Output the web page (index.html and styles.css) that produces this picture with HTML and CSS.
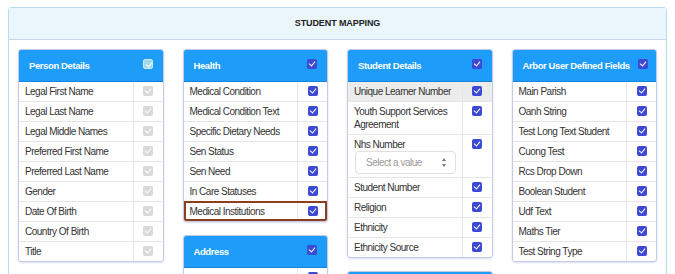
FILE: index.html
```html
<html>
  <head>
    <link rel="stylesheet" href="styles.css">
  </head>
  <body>
    <div class="panel">
      <div class="panel-heading">STUDENT MAPPING</div>
      <div class="panel-body">

        <div class="column">
          <div class="card">
            <div class="card-header">
              <span class="card-title">Person Details</span>
              <span class="head-check"><span class="cb cb-faded"></span></span>
            </div>
            <div class="row"><span class="name">Legal First Name</span><span class="check"><span class="cb cb-off"></span></span></div>
            <div class="row"><span class="name">Legal Last Name</span><span class="check"><span class="cb cb-off"></span></span></div>
            <div class="row"><span class="name">Legal Middle Names</span><span class="check"><span class="cb cb-off"></span></span></div>
            <div class="row"><span class="name">Preferred First Name</span><span class="check"><span class="cb cb-off"></span></span></div>
            <div class="row"><span class="name">Preferred Last Name</span><span class="check"><span class="cb cb-off"></span></span></div>
            <div class="row"><span class="name">Gender</span><span class="check"><span class="cb cb-off"></span></span></div>
            <div class="row"><span class="name">Date Of Birth</span><span class="check"><span class="cb cb-off"></span></span></div>
            <div class="row"><span class="name">Country Of Birth</span><span class="check"><span class="cb cb-off"></span></span></div>
            <div class="row"><span class="name">Title</span><span class="check"><span class="cb cb-off"></span></span></div>
          </div>
        </div>

        <div class="column">
          <div class="card">
            <div class="card-header">
              <span class="card-title">Health</span>
              <span class="head-check"><span class="cb"></span></span>
            </div>
            <div class="row"><span class="name">Medical Condition</span><span class="check"><span class="cb"></span></span></div>
            <div class="row"><span class="name">Medical Condition Text</span><span class="check"><span class="cb"></span></span></div>
            <div class="row"><span class="name">Specific Dietary Needs</span><span class="check"><span class="cb"></span></span></div>
            <div class="row"><span class="name">Sen Status</span><span class="check"><span class="cb"></span></span></div>
            <div class="row"><span class="name">Sen Need</span><span class="check"><span class="cb"></span></span></div>
            <div class="row"><span class="name">In Care Statuses</span><span class="check"><span class="cb"></span></span></div>
            <div class="row highlighted"><span class="name">Medical Institutions</span><span class="check"><span class="cb"></span></span></div>
          </div>
          <div class="card">
            <div class="card-header">
              <span class="card-title">Address</span>
              <span class="head-check"><span class="cb"></span></span>
            </div>
            <div class="row"><span class="name">&nbsp;</span><span class="check"><span class="cb"></span></span></div>
          </div>
        </div>

        <div class="column">
          <div class="card">
            <div class="card-header">
              <span class="card-title">Student Details</span>
              <span class="head-check"><span class="cb"></span></span>
            </div>
            <div class="row active"><span class="name">Unique Learner Number</span><span class="check"><span class="cb"></span></span></div>
            <div class="row"><span class="name">Youth Support Services Agreement</span><span class="check"><span class="cb"></span></span></div>
            <div class="row">
              <span class="name">Nhs Number
                <span class="select">Select a value<span class="arrows"></span></span>
              </span>
              <span class="check"><span class="cb"></span></span>
            </div>
            <div class="row"><span class="name">Student Number</span><span class="check"><span class="cb"></span></span></div>
            <div class="row"><span class="name">Religion</span><span class="check"><span class="cb"></span></span></div>
            <div class="row"><span class="name">Ethnicity</span><span class="check"><span class="cb"></span></span></div>
            <div class="row"><span class="name">Ethnicity Source</span><span class="check"><span class="cb"></span></span></div>
          </div>
          <div class="card">
            <div class="card-header">
              <span class="card-title">&nbsp;</span>
            </div>
          </div>
        </div>

        <div class="column">
          <div class="card">
            <div class="card-header">
              <span class="card-title">Arbor User Defined Fields</span>
              <span class="head-check"><span class="cb"></span></span>
            </div>
            <div class="row"><span class="name">Main Parish</span><span class="check"><span class="cb"></span></span></div>
            <div class="row"><span class="name">Oanh String</span><span class="check"><span class="cb"></span></span></div>
            <div class="row"><span class="name">Test Long Text Student</span><span class="check"><span class="cb"></span></span></div>
            <div class="row"><span class="name">Cuong Test</span><span class="check"><span class="cb"></span></span></div>
            <div class="row"><span class="name">Rcs Drop Down</span><span class="check"><span class="cb"></span></span></div>
            <div class="row"><span class="name">Boolean Student</span><span class="check"><span class="cb"></span></span></div>
            <div class="row"><span class="name">Udf Text</span><span class="check"><span class="cb"></span></span></div>
            <div class="row"><span class="name">Maths Tier</span><span class="check"><span class="cb"></span></span></div>
            <div class="row"><span class="name">Test String Type</span><span class="check"><span class="cb"></span></span></div>
          </div>
        </div>

      </div>
    </div>
  </body>
</html>
```
FILE: styles.css
```css
* {
  box-sizing: border-box;
}

body {
  margin: 0;
  font-family: "Liberation Sans", Arial, sans-serif;
  font-size: 10px;
  letter-spacing: -0.5px;
  color: #333;
  background: #fff;
}

.panel {
  margin: 7px 8px 0 8px;
  border: 1px solid #b6def2;
  border-radius: 3px;
  height: 300px;
}

.panel-heading {
  height: 32px;
  line-height: 30px;
  text-align: center;
  font-weight: bold;
  font-size: 9px;
  letter-spacing: -0.1px;
  color: #222;
  background: #eaf5fc;
  border-bottom: 1px solid #c7d5ee;
}

.panel-body {
  display: grid;
  grid-template-columns: repeat(4, minmax(0, 1fr));
  column-gap: 19px;
  padding: 9px 9px 0 9px;
  align-items: start;
}

.column {
  display: flex;
  flex-direction: column;
  gap: 13px;
}

.card {
  border: 1px solid #c3c9e6;
  border-radius: 3px;
  box-shadow: 0 1px 2px rgba(120, 130, 200, 0.25);
  overflow: hidden;
}

.card-header {
  display: flex;
  height: 32px;
  align-items: center;
  background: #1e9cf9;
  color: #fff;
  font-weight: bold;
  font-size: 9.5px;
  letter-spacing: -0.4px;
  border-bottom: 1px solid #1a84dc;
}

.card-title {
  flex: 1;
  padding-left: 10px;
  white-space: nowrap;
}

.head-check {
  width: 30px;
  text-align: center;
  padding-bottom: 3px;
}

.row {
  display: flex;
  border-top: 1px solid #e6e6e6;
}

.card-header + .row {
  border-top: none;
}

.row.active {
  background: #ececec;
}

.row.highlighted {
  outline: 2px solid #8c3f1c;
  outline-offset: -2px;
}

.name {
  flex: 1;
  padding: 3px 6px 3px 6px;
  line-height: 13px;
}

.check {
  width: 30px;
  border-left: 1px solid #e6e6e6;
  text-align: center;
  padding-top: 4px;
}

.cb {
  display: inline-block;
  position: relative;
  width: 10px;
  height: 10px;
  border-radius: 2px;
  background: #3c49d2;
  vertical-align: top;
}

.cb::after {
  content: "";
  position: absolute;
  left: 3px;
  top: 1px;
  width: 3px;
  height: 5px;
  border: solid #fff;
  border-width: 0 1.5px 1.5px 0;
  transform: rotate(40deg);
}

.cb-off {
  background: #d9d9d9;
}

.cb-faded {
  background: #9fd8e8;
  border: 1px solid #c9ecf0;
}

.select {
  display: flex;
  align-items: center;
  justify-content: space-between;
  margin: 0 0 0 1px;
  height: 23px;
  padding: 0 8px 0 10px;
  border: 1px solid #e1e1e1;
  border-radius: 4px;
  color: #9a9a9a;
}

.arrows {
  position: relative;
  width: 5px;
  height: 9px;
}

.arrows::before,
.arrows::after {
  content: "";
  position: absolute;
  left: 0;
  border-left: 2.5px solid transparent;
  border-right: 2.5px solid transparent;
}

.arrows::before {
  top: 0;
  border-bottom: 3px solid #777;
}

.arrows::after {
  bottom: 0;
  border-top: 3px solid #777;
}
```
